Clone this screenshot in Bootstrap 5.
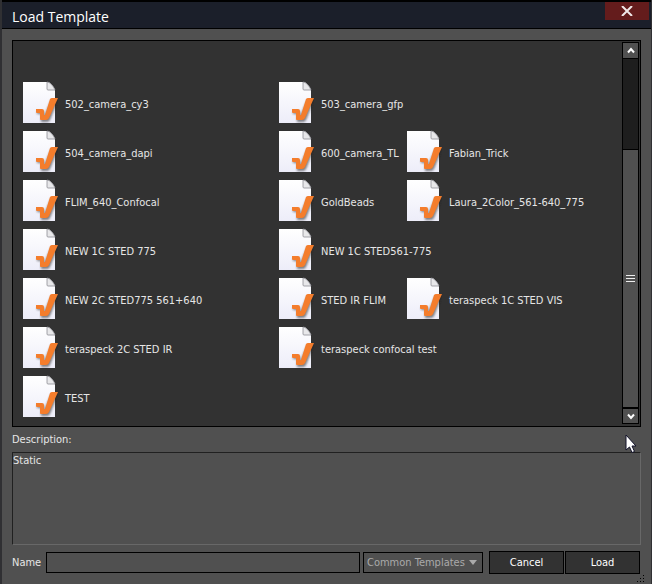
<!DOCTYPE html>
<html lang="en">
<head>
<meta charset="utf-8">
<meta name="viewport" content="width=device-width, initial-scale=1">
<title>Load Template</title>
<link href="https://cdn.jsdelivr.net/npm/bootstrap@5.3.0/dist/css/bootstrap.min.css" rel="stylesheet">
<style>
  body { font-family: "DejaVu Sans Condensed", "DejaVu Sans", sans-serif; font-size: 11px; line-height: 16px; color: #e6e6e6; background: #505050; }
  .dialog { border: solid #303033; border-width: 0 1px 0 2px; }
  .title-bar { height: 29px; background: #1b1f2a; border-top: 2px solid #000; border-bottom: 1px solid #000; padding-right: 2px; }
  .title-text { font-family: "Open Sans", sans-serif; font-size: 14px; font-weight: 400; line-height: 20px; color: #fff; padding: 5px 0 0 10px; }
  .close-btn { width: 44px; height: 18px; background: #641c1c; }
  .dialog-main { padding: 11px 10px 10px; }
  .file-panel { background: #323232; border: 1px solid #000; padding: 1px 1px 2px; }
  .file-grid { display: grid; grid-template-columns: 256px 128px 1fr; grid-auto-rows: 49px; padding: 38px 0 0 8px; }
  .file-item { display: flex; align-items: center; gap: 7px; padding: 0; border: 0; background: none; color: inherit; white-space: nowrap; text-align: left; }
  .first-col { grid-column: 1; }
  .file-item svg { width: 36px; height: 44px; flex: none; margin-bottom: 4px; }
  .scroller { width: 17px; border: 1px solid #000; background: #1e1e1e; }
  .scroll-btn { height: 16px; background: #505050; }
  .scroll-top { border-bottom: 1px solid #000; }
  .scroll-end { border-top: 2px solid #000; }
  .thumb { height: 74%; background: #505050; border-top: 1px solid #000; }
  .desc-label { padding: 5px 0 4px; }
  .desc-box { height: 93px; resize: none; background: #505050; color: inherit; border: 1px solid; border-color: #202020 #686868 #686868 #202020; padding: 0; }
  .name-row { margin-top: 6px; padding-right: 1px; }
  .name-input, .scope-select { height: 21px; border: 1px solid #000; background-color: #505050; color: inherit; }
  .name-input { margin-left: 5px; min-width: 0; }
  .scope-select { width: 120px; margin-left: 3px; padding: 0 0 0 3px; color: #aaa; appearance: none; }
  .scope-arrow { right: 6px; top: 8px; pointer-events: none; }
  .action-btn { width: 75px; height: 23px; background: #323232; border: 1px solid #000; color: #fff; padding: 0; }
  .action-pair { gap: 1px; margin-left: 6px; }
  .pointer { right: 14px; top: 434px; pointer-events: none; }
  .grip { right: 7px; bottom: 2px; }
</style>
<script src="https://cdn.jsdelivr.net/npm/bootstrap@5.3.0/dist/js/bootstrap.bundle.min.js"></script>
</head>
<body>
<svg class="position-absolute" width="0" height="0" aria-hidden="true">
  <defs>
    <linearGradient id="paper" x1="0" y1="0" x2="0" y2="1"><stop offset="0" stop-color="#fff"/><stop offset="1" stop-color="#ededf9"/></linearGradient>
    <filter id="soft" x="-30%" y="-30%" width="160%" height="160%"><feGaussianBlur stdDeviation="1"/></filter>
  </defs>
  <symbol id="file" viewBox="0 0 36 44">
    <path d="M1 1H25Q28 1 30 4L32 7Q33 8 33 10V42H1Z" fill="url(#paper)"/>
    <path d="M25 1V8Q25 9 26 9H33Q32 6 29 3Q27 1 25 1Z" fill="#e8e8ea" stroke="#8e8e94" stroke-width=".8"/>
    <path d="M15 30H22V36L29 19H36L28 39Q27 41 25 41H19V33H15Z" fill="#222" opacity=".55" filter="url(#soft)"/>
    <path d="M14 28H20Q22 28 22 30V34H23L28 18Q29 17 30 17H36L27 37Q26 39 24 39H19Q18 39 18 38V32H15Q14 32 14 31Z" fill="#f47d2c"/>
  </symbol>
</svg>
<div class="dialog position-relative d-flex flex-column min-vh-100">
  <header class="title-bar d-flex justify-content-between align-items-start">
    <h1 class="title-text m-0">Load Template</h1>
    <button type="button" class="close-btn border-0 p-0 d-flex align-items-center justify-content-center" aria-label="Close">
      <svg width="12" height="10" viewBox="0 0 12 10"><path d="M1 0L11 10M11 0L1 10" stroke="#f0e8e8" stroke-width="2"/></svg>
    </button>
  </header>
  <main class="dialog-main d-flex flex-column flex-grow-1">
    <section class="file-panel d-flex flex-grow-1">
      <div class="file-grid flex-grow-1 align-content-start">
        <button type="button" class="file-item first-col"><svg><use href="#file"/></svg>502_camera_cy3</button>
        <button type="button" class="file-item"><svg><use href="#file"/></svg>503_camera_gfp</button>
        <button type="button" class="file-item first-col"><svg><use href="#file"/></svg>504_camera_dapi</button>
        <button type="button" class="file-item"><svg><use href="#file"/></svg>600_camera_TL</button>
        <button type="button" class="file-item"><svg><use href="#file"/></svg>Fabian_Trick</button>
        <button type="button" class="file-item first-col"><svg><use href="#file"/></svg>FLIM_640_Confocal</button>
        <button type="button" class="file-item"><svg><use href="#file"/></svg>GoldBeads</button>
        <button type="button" class="file-item"><svg><use href="#file"/></svg>Laura_2Color_561-640_775</button>
        <button type="button" class="file-item first-col"><svg><use href="#file"/></svg>NEW 1C STED 775</button>
        <button type="button" class="file-item"><svg><use href="#file"/></svg>NEW 1C STED561-775</button>
        <button type="button" class="file-item first-col"><svg><use href="#file"/></svg>NEW 2C STED775 561+640</button>
        <button type="button" class="file-item"><svg><use href="#file"/></svg>STED IR FLIM</button>
        <button type="button" class="file-item"><svg><use href="#file"/></svg>teraspeck 1C STED VIS</button>
        <button type="button" class="file-item first-col"><svg><use href="#file"/></svg>teraspeck 2C STED IR</button>
        <button type="button" class="file-item"><svg><use href="#file"/></svg>teraspeck confocal test</button>
        <button type="button" class="file-item first-col"><svg><use href="#file"/></svg>TEST</button>
      </div>
      <div class="scroller d-flex flex-column flex-shrink-0">
        <button type="button" class="scroll-btn scroll-top border-start-0 border-end-0 border-top-0 p-0 d-flex align-items-center justify-content-center" aria-label="Scroll up"><svg width="8" height="7" viewBox="0 0 8 7"><path d="M1 5.5L4 2L7 5.5" fill="none" stroke="#fff" stroke-width="2"/></svg></button>
        <div class="flex-grow-1 d-flex flex-column justify-content-end">
          <div class="thumb d-flex align-items-center justify-content-center"><svg width="9" height="8" viewBox="0 0 9 8"><path d="M0 .5H9M0 3.5H9M0 6.5H9" stroke="#eee"/></svg></div>
        </div>
        <button type="button" class="scroll-btn scroll-end border-start-0 border-end-0 border-bottom-0 p-0 d-flex align-items-center justify-content-center" aria-label="Scroll down"><svg width="8" height="7" viewBox="0 0 8 7"><path d="M1 1.5L4 5L7 1.5" fill="none" stroke="#fff" stroke-width="2"/></svg></button>
      </div>
    </section>
    <label class="desc-label" for="desc">Description:</label>
    <textarea id="desc" class="desc-box w-100 rounded-0" readonly>Static</textarea>
    <form class="name-row d-flex align-items-center">
      <label for="name">Name</label>
      <input id="name" type="text" class="name-input flex-grow-1 rounded-0">
      <div class="position-relative">
        <select class="scope-select rounded-0" aria-label="Template scope"><option>Common Templates</option></select>
        <svg class="scope-arrow position-absolute" width="8" height="5" viewBox="0 0 8 5"><path d="M0 0H8L4 5Z" fill="#aaa"/></svg>
      </div>
      <div class="action-pair d-flex">
        <button type="button" class="action-btn">Cancel</button>
        <button type="submit" class="action-btn">Load</button>
      </div>
    </form>
  </main>
  <svg class="grip position-absolute" width="7" height="7" viewBox="0 0 7 7"><path d="M6 0h1v1h-1zM3 3h1v1h-1zM6 3h1v1h-1zM0 6h1v1h-1zM3 6h1v1h-1zM6 6h1v1h-1z" fill="#000"/></svg>
  <svg class="pointer position-absolute" width="12" height="20" viewBox="0 0 12 20"><path d="M1 1V16L4.5 13L7 18.5L9.500 17.500L7 12H11Z" fill="#fff" stroke="#12122a"/></svg>
</div>
</body>
</html>
